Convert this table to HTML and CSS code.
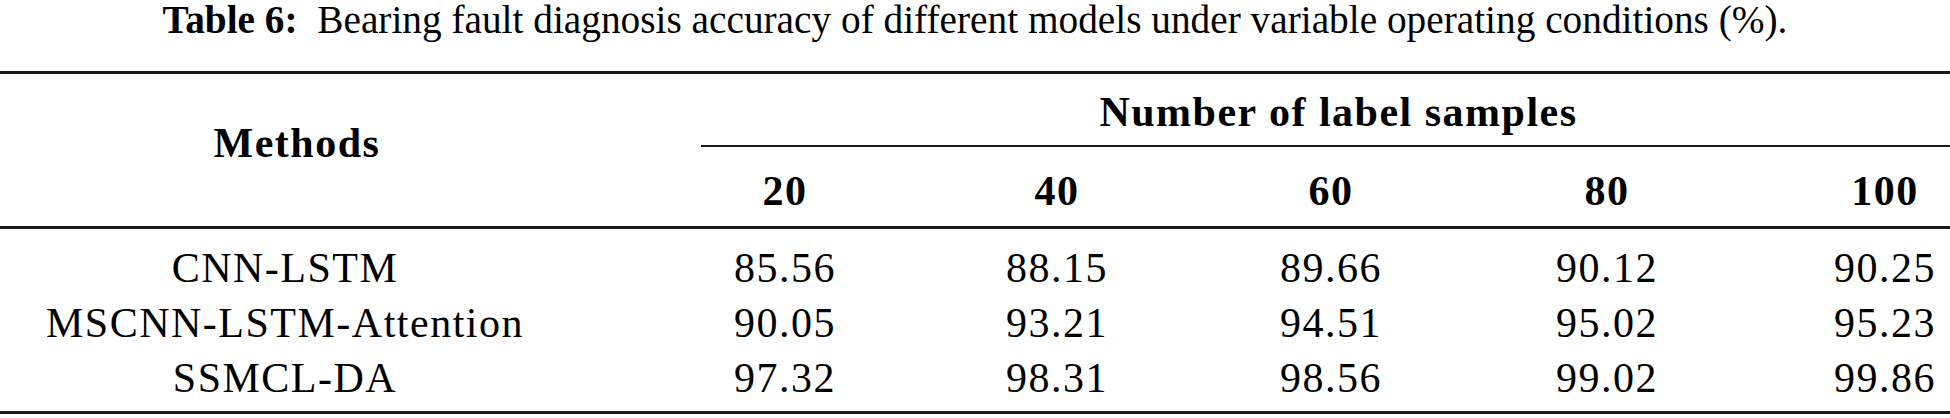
FILE: index.html
```html
<!DOCTYPE html>
<html lang="en">
<head>
    <meta charset="UTF-8">
    <title>Table 6</title>
    <link rel="stylesheet" href="styles.css">
</head>
<body>
    <p class="caption"><b>Table 6:</b>&nbsp; Bearing fault diagnosis accuracy of different models under variable operating conditions (%).</p>
    <div class="thead">
        <div class="methods">Methods</div>
        <div class="group">Number of label samples</div>
        <div class="num">20</div>
        <div class="num">40</div>
        <div class="num">60</div>
        <div class="num">80</div>
        <div class="num last">100</div>
    </div>
    <div class="tbody">
        <div class="name">CNN-LSTM</div>
        <div>85.56</div>
        <div>88.15</div>
        <div>89.66</div>
        <div>90.12</div>
        <div class="last">90.25</div>

        <div class="name">MSCNN-LSTM-Attention</div>
        <div>90.05</div>
        <div>93.21</div>
        <div>94.51</div>
        <div>95.02</div>
        <div class="last">95.23</div>

        <div class="name">SSMCL-DA</div>
        <div>97.32</div>
        <div>98.31</div>
        <div>98.56</div>
        <div>99.02</div>
        <div class="last">99.86</div>
    </div>
</body>
</html>
```

FILE: styles.css
```css
body {
    margin: 0;
    background: #fff;
    color: #000;
    font-family: "Liberation Serif", "Times New Roman", serif;
}
.caption {
    margin: 0 0 31px;
    font-size: 39.3px;
    line-height: 40px;
    text-align: center;
}
.thead, .tbody {
    display: grid;
    grid-template-columns: 649px 272px 272px 276px 276px 205px;
    font-size: 42px;
    letter-spacing: 1.5px;
    text-align: center;
}
.thead {
    font-weight: bold;
    border-top: 3px solid #1a1a1a;
    border-bottom: 3px solid #1a1a1a;
}
.methods {
    grid-row: 1 / 3;
    padding: 46px 55px 0 0;
    line-height: 46px;
}
.group {
    grid-column: 2 / -1;
    margin-left: 52px;
    padding: 15px 0 10px 26px;
    line-height: 46px;
    border-bottom: 2px solid #1a1a1a;
}
.num {
    padding: 21px 0 12px;
    line-height: 46px;
}
.last {
    padding-left: 75px;
}
.tbody {
    padding: 12px 0 5px;
    border-bottom: 3px solid #1a1a1a;
    line-height: 55px;
}
.name {
    padding-right: 79px;
}
```
